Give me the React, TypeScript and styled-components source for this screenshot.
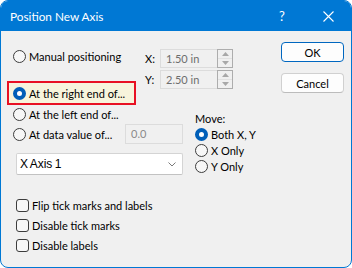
import React from 'react';
import styled, { createGlobalStyle } from 'styled-components';

const GlobalStyle = createGlobalStyle`
  html, body {
    margin: 0;
    padding: 0;
    background: #ffffff;
  }
  * {
    box-sizing: border-box;
  }
`;

const App: React.FC = () => {
  return (
    <Fragment>
      <GlobalStyle />
      <Window>
        <TitleBar>
          <Title>Position New Axis</Title>
          <HelpGlyph>?</HelpGlyph>
          <CloseGlyph>
            <svg width="11" height="11" viewBox="0 0 11 11">
              <path d="M0.5 0.5 L10.5 10.5 M10.5 0.5 L0.5 10.5" stroke="#ffffff" strokeWidth="1.1" />
            </svg>
          </CloseGlyph>
        </TitleBar>
        <Body>
          <Content>
            <TopRow>
              <OptionColumn>
                <OptionRow>
                  <Radio />
                  <Label>Manual positioning</Label>
                </OptionRow>
                <Highlight>
                  <Radio checked />
                  <Label>At the right end of...</Label>
                </Highlight>
              </OptionColumn>
              <CoordColumn>
                <CoordRow>
                  <CoordLabel>X:</CoordLabel>
                  <SpinField value="1.50 in" />
                </CoordRow>
                <CoordRow>
                  <CoordLabel>Y:</CoordLabel>
                  <SpinField value="2.50 in" />
                </CoordRow>
              </CoordColumn>
            </TopRow>
            <MidRow>
              <LeftColumn>
                <OptionRow>
                  <Radio />
                  <Label>At the left end of...</Label>
                </OptionRow>
                <OptionRow>
                  <Radio />
                  <Label>At data value of...</Label>
                  <ValueBox>0.0</ValueBox>
                </OptionRow>
                <Combo>
                  <ComboText>X Axis 1</ComboText>
                  <svg width="8" height="5" viewBox="0 0 8 5">
                    <path d="M0.5 0.5 L4 4 L7.5 0.5" stroke="#7a7a7a" strokeWidth="1" fill="none" />
                  </svg>
                </Combo>
              </LeftColumn>
              <MoveGroup>
                <GroupLabel>Move:</GroupLabel>
                <MoveRow>
                  <Radio checked />
                  <Label>Both X, Y</Label>
                </MoveRow>
                <MoveRow>
                  <Radio />
                  <Label>X Only</Label>
                </MoveRow>
                <MoveRow>
                  <Radio />
                  <Label>Y Only</Label>
                </MoveRow>
              </MoveGroup>
            </MidRow>
            <CheckList>
              {['Flip tick marks and labels', 'Disable tick marks', 'Disable labels'].map((t) => (
                <CheckRow key={t}>
                  <CheckBox />
                  <Label>{t}</Label>
                </CheckRow>
              ))}
            </CheckList>
          </Content>
          <ButtonColumn>
            <Button $primary>OK</Button>
            <Button>Cancel</Button>
          </ButtonColumn>
        </Body>
      </Window>
    </Fragment>
  );
};

const SpinField: React.FC<{ value: string }> = ({ value }) => (
  <SpinWrap>
    <FieldText>{value}</FieldText>
    <Spinner>
      <SpinHalf>
        <svg width="7" height="4" viewBox="0 0 7 4">
          <path d="M0 4 L3.5 0 L7 4 Z" fill="#a8a8a8" />
        </svg>
      </SpinHalf>
      <SpinHalf>
        <svg width="7" height="4" viewBox="0 0 7 4">
          <path d="M0 0 L3.5 4 L7 0 Z" fill="#a8a8a8" />
        </svg>
      </SpinHalf>
    </Spinner>
  </SpinWrap>
);

const Fragment = React.Fragment;

export default App;

const font = `Lato, "Noto Sans", sans-serif`;

const Window = styled.div`
  width: 352px;
  height: 268px;
  border: 1px solid #0078d4;
  border-radius: 8px;
  overflow: hidden;
  background: #f0f0f0;
  display: flex;
  flex-direction: column;
  font-family: ${font};
  font-size: 11px;
  color: #000000;
`;

const TitleBar = styled.div`
  height: 30px;
  background: #0078d4;
  display: flex;
  align-items: center;
  padding-left: 9px;
  color: #ffffff;
`;

const Title = styled.div`
  font-size: 11.8px;
  flex: 1;
`;

const HelpGlyph = styled.div`
  font-size: 13px;
  width: 46px;
  text-align: center;
`;

const CloseGlyph = styled.div`
  width: 46px;
  display: flex;
  justify-content: center;
  align-items: center;
`;

const Body = styled.div`
  flex: 1;
  display: flex;
  padding: 11px 7px 0 6px;
`;

const Content = styled.div`
  display: flex;
  flex-direction: column;
  width: 250px;
`;

const TopRow = styled.div`
  display: flex;
`;

const OptionColumn = styled.div`
  width: 138px;
  display: flex;
  flex-direction: column;
  padding-top: 4px;
`;

const OptionRow = styled.div`
  height: 20px;
  display: flex;
  align-items: center;
  padding-left: 6px;
`;

const Highlight = styled.div`
  margin-top: 15px;
  height: 24px;
  width: 129px;
  border: 2px solid #e81123;
  background: #f7f4dc;
  display: flex;
  align-items: center;
  padding-left: 4px;
`;

const Radio = styled.span<{ checked?: boolean }>`
  width: 13px;
  height: 13px;
  flex: none;
  border-radius: 50%;
  box-sizing: border-box;
  border: ${(p) => (p.checked ? '4px solid #005fb8' : '1px solid #3c3c3c')};
  background: ${(p) => (p.checked ? '#ffffff' : '#f7f7f7')};
`;

const Label = styled.span`
  margin-left: 3px;
  white-space: nowrap;
`;

const CoordColumn = styled.div`
  display: flex;
  flex-direction: column;
  gap: 2px;
  padding-top: 7px;
`;

const CoordRow = styled.div`
  display: flex;
  align-items: center;
`;

const CoordLabel = styled.span`
  width: 15px;
`;

const SpinWrap = styled.div`
  width: 73px;
  height: 19px;
  display: flex;
  border: 1px solid #dcdcdc;
  border-right: none;
`;

const FieldText = styled.div`
  flex: 1;
  padding-left: 5px;
  color: #6d6d6d;
  line-height: 17px;
`;

const Spinner = styled.div`
  width: 16px;
  display: flex;
  flex-direction: column;
  border: 1px solid #adadad;
  margin-top: -1px;
  margin-bottom: -1px;
  background: #f0f0f0;
`;

const SpinHalf = styled.div`
  flex: 1;
  display: flex;
  align-items: center;
  justify-content: center;
  & + & {
    border-top: 1px solid #e2e2e2;
  }
`;

const MidRow = styled.div`
  display: flex;
  margin-top: -1px;
`;

const LeftColumn = styled.div`
  width: 176px;
  display: flex;
  flex-direction: column;
`;

const ValueBox = styled.div`
  margin-left: auto;
  width: 58px;
  height: 20px;
  border: 1px solid #dcdcdc;
  color: #8a8a8a;
  padding-left: 5px;
  line-height: 18px;
`;

const Combo = styled.div`
  margin: 9px 0 0 9px;
  height: 22px;
  width: 167px;
  background: #ffffff;
  border: 1px solid #d4d4d4;
  border-bottom-color: #c2c2c2;
  border-radius: 2px;
  display: flex;
  align-items: center;
  justify-content: space-between;
  padding: 0 6px 0 3px;
`;

const ComboText = styled.span`
  font-family: "Liberation Sans", Arial, sans-serif;
  font-size: 12px;
  word-spacing: -1px;
`;

const MoveGroup = styled.div`
  margin: 8px 0 0 12px;
  display: flex;
  flex-direction: column;
`;

const GroupLabel = styled.div`
  height: 14px;
  line-height: 14px;
`;

const MoveRow = styled.div`
  height: 16px;
  display: flex;
  align-items: center;
`;

const CheckList = styled.div`
  margin-top: 20px;
  padding-left: 9px;
  display: flex;
  flex-direction: column;
`;

const CheckRow = styled.div`
  height: 20px;
  display: flex;
  align-items: center;
`;

const CheckBox = styled.span`
  width: 13px;
  height: 13px;
  flex: none;
  border: 1px solid #3c3c3c;
  border-radius: 3px;
  background: #f7f7f7;
`;

const ButtonColumn = styled.div`
  margin-left: auto;
  display: flex;
  flex-direction: column;
  gap: 11px;
`;

const Button = styled.div<{ $primary?: boolean }>`
  width: 63px;
  height: 20px;
  display: flex;
  align-items: center;
  justify-content: center;
  background: #fdfdfd;
  border: 1px solid ${(p) => (p.$primary ? '#0067c0' : '#d0d0d0')};
  border-bottom-color: ${(p) => (p.$primary ? '#0067c0' : '#bcbcbc')};
  border-radius: 4px;
`;
